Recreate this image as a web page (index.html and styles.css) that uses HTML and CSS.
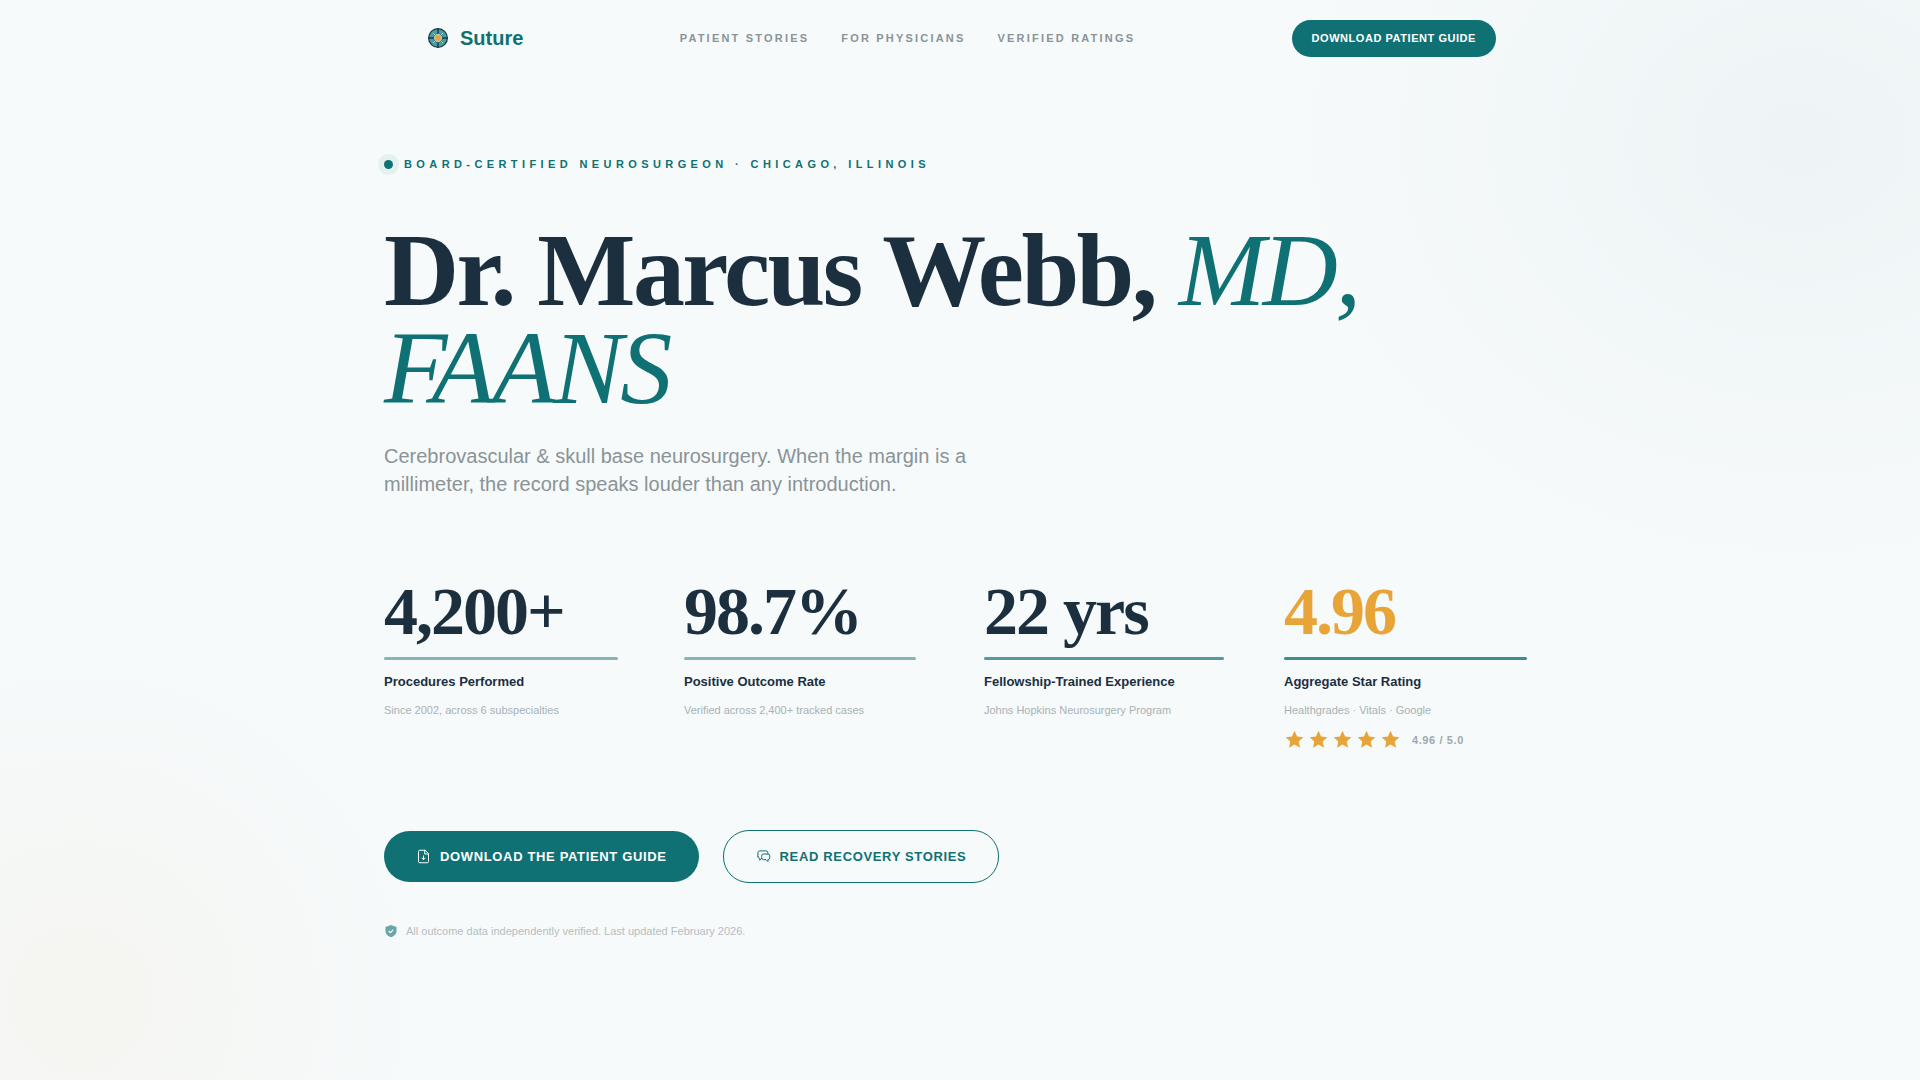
FILE: index.html
```html
<!DOCTYPE html>
<html lang="en">
<head>
    <meta charset="UTF-8">
    <meta name="viewport" content="width=device-width, initial-scale=1.0">
    <title>Dr. Marcus Webb, MD, FAANS</title>
    <link rel="stylesheet" href="styles.css">
</head>
<body>
    <div class="page">
        <header class="topbar">
            <a class="brand" href="#">
                <svg class="brand-mark" viewBox="0 0 24 24">
                    <circle cx="12" cy="12" r="12" fill="#1b3a4b"/>
                    <circle cx="12" cy="12" r="8" fill="none" stroke="#4f9c9c" stroke-width="5"/>
                    <path d="M12 0v24M0 12h24" stroke="#1b3a4b" stroke-width="1.8"/>
                    <path d="M6 6l12 12M18 6L6 18" stroke="#a5cdc8" stroke-width="1.2"/>
                    <circle cx="12" cy="12" r="5" fill="#a5cdc8"/>
                    <circle cx="12" cy="12" r="3.2" fill="#e8a436"/>
                </svg>
                <span>Suture</span>
            </a>
            <nav class="nav-links">
                <a href="#">Patient Stories</a>
                <a href="#">For Physicians</a>
                <a href="#">Verified Ratings</a>
            </nav>
            <a class="nav-cta" href="#">Download Patient Guide</a>
        </header>

        <main class="hero">
            <div class="eyebrow">
                <span class="eyebrow-dot"></span>
                <span>Board-Certified Neurosurgeon · Chicago, Illinois</span>
            </div>

            <h1 class="hero-title">Dr. Marcus Webb, <em>MD, FAANS</em></h1>

            <p class="hero-sub">Cerebrovascular &amp; skull base neurosurgery. When the margin is a millimeter, the record speaks louder than any introduction.</p>

            <section class="stats">
                <div class="stat">
                    <div class="stat-value">4,200+</div>
                    <div class="stat-bar bar-1" style="width: 234px"></div>
                    <div class="stat-label">Procedures Performed</div>
                    <div class="stat-note">Since 2002, across 6 subspecialties</div>
                </div>
                <div class="stat">
                    <div class="stat-value">98.7%</div>
                    <div class="stat-bar bar-2" style="width: 232px"></div>
                    <div class="stat-label">Positive Outcome Rate</div>
                    <div class="stat-note">Verified across 2,400+ tracked cases</div>
                </div>
                <div class="stat">
                    <div class="stat-value">22 yrs</div>
                    <div class="stat-bar bar-3" style="width: 240px"></div>
                    <div class="stat-label">Fellowship-Trained Experience</div>
                    <div class="stat-note">Johns Hopkins Neurosurgery Program</div>
                </div>
                <div class="stat">
                    <div class="stat-value gold">4.96</div>
                    <div class="stat-bar bar-4" style="width: 243px"></div>
                    <div class="stat-label">Aggregate Star Rating</div>
                    <div class="stat-note">Healthgrades · Vitals · Google</div>
                    <div class="rating">
                        <div class="stars">
                            <svg viewBox="0 0 24 24"><path d="M12 2l3 6.6 7.2.8-5.4 4.8 1.5 7.1L12 17.7l-6.3 3.6 1.5-7.1L1.800 9.400 9 8.600z"/></svg>
                            <svg viewBox="0 0 24 24"><path d="M12 2l3 6.6 7.2.8-5.4 4.8 1.5 7.1L12 17.7l-6.3 3.6 1.5-7.1L1.800 9.400 9 8.600z"/></svg>
                            <svg viewBox="0 0 24 24"><path d="M12 2l3 6.6 7.2.8-5.4 4.8 1.5 7.1L12 17.7l-6.3 3.6 1.5-7.1L1.800 9.400 9 8.600z"/></svg>
                            <svg viewBox="0 0 24 24"><path d="M12 2l3 6.6 7.2.8-5.4 4.8 1.5 7.1L12 17.7l-6.3 3.6 1.5-7.1L1.800 9.400 9 8.600z"/></svg>
                            <svg viewBox="0 0 24 24"><path d="M12 2l3 6.6 7.2.8-5.4 4.8 1.5 7.1L12 17.7l-6.3 3.6 1.5-7.1L1.800 9.400 9 8.600z"/></svg>
                        </div>
                        <span class="rating-text">4.96 / 5.0</span>
                    </div>
                </div>
            </section>

            <div class="actions">
                <a class="btn btn-solid" href="#">
                    <svg class="btn-icon" viewBox="0 0 24 24">
                        <path d="M14 2H6a2 2 0 0 0-2 2v16a2 2 0 0 0 2 2h12a2 2 0 0 0 2-2V8z"/>
                        <path d="M14 2v6h6M12 11v6M9.500 14.500L12 17l2.500-2.500"/>
                    </svg>
                    Download the Patient Guide
                </a>
                <a class="btn btn-outline" href="#">
                    <svg class="btn-icon" viewBox="0 0 24 24">
                        <path d="M3 12V6a3 3 0 0 1 3-3h10a3 3 0 0 1 3 3v2"/>
                        <path d="M3 12a3 3 0 0 0 3 3v3l3-3"/>
                        <path d="M9 11a3 3 0 0 1 3-3h7a3 3 0 0 1 3 3v3a3 3 0 0 1-3 3v3l-3-3h-4a3 3 0 0 1-3-3z"/>
                    </svg>
                    Read Recovery Stories
                </a>
            </div>

            <div class="verified">
                <svg viewBox="0 0 24 24">
                    <path class="shield" d="M12 1.500l9.500 3.500v6.500c0 5.500-4 9.500-9.500 11-5.500-1.500-9.500-5.500-9.500-11V5z"/>
                    <path class="tick" d="M8 12l3 3 5-5.500"/>
                </svg>
                <span>All outcome data independently verified. Last updated February 2026.</span>
            </div>
        </main>
    </div>
</body>
</html>
```

FILE: styles.css
```css
* {
    margin: 0;
    padding: 0;
    box-sizing: border-box;
}

html, body {
    height: 100%;
}

body {
    font-family: 'Liberation Sans', Arial, sans-serif;
    color: #1b2f3e;
    background-color: #f6fafb;
    background-image:
        radial-gradient(ellipse 760px 640px at 1800px 140px, rgba(15, 80, 90, 0.035), transparent 70%),
        radial-gradient(ellipse 520px 520px at 80px 1000px, rgba(232, 164, 54, 0.05), transparent 70%);
    overflow: hidden;
}

a {
    text-decoration: none;
}

.page {
    min-height: 100%;
}

/* Top bar */
.topbar {
    width: 1070px;
    height: 76px;
    margin-left: 426px;
    display: flex;
    align-items: center;
    justify-content: space-between;
}

.brand {
    display: flex;
    align-items: center;
    gap: 12px;
    padding-left: 2px;
    font-size: 20px;
    font-weight: 700;
    color: #0f7173;
}

.brand-mark {
    width: 20px;
    height: 20px;
}

.nav-links {
    display: flex;
    gap: 32px;
}

.nav-links a {
    font-size: 11px;
    font-weight: 700;
    letter-spacing: 2.2px;
    text-transform: uppercase;
    color: #8a9396;
}

.nav-cta {
    padding: 0 20px;
    height: 37px;
    line-height: 37px;
    border-radius: 19px;
    background: #0f7173;
    color: #fff;
    font-size: 11px;
    font-weight: 700;
    letter-spacing: 0.55px;
    text-transform: uppercase;
}

/* Hero */
.hero {
    padding: 82px 0 0 384px;
}

.eyebrow {
    display: flex;
    align-items: center;
    gap: 11px;
    font-size: 11px;
    font-weight: 700;
    letter-spacing: 4.4px;
    text-transform: uppercase;
    color: #0f7173;
}

.eyebrow-dot {
    width: 9px;
    height: 9px;
    border-radius: 50%;
    background: #0f7173;
    box-shadow: 0 0 0 6px rgba(15, 113, 115, 0.07);
}

.hero-title {
    width: 1050px;
    margin-top: 51px;
    font-family: 'Liberation Serif', 'Times New Roman', serif;
    font-size: 104px;
    font-weight: 700;
    line-height: 98px;
    letter-spacing: -2.6px;
    color: #1b2f3e;
}

.hero-title em {
    font-weight: 400;
    color: #0f7173;
}

.hero-sub {
    width: 600px;
    margin-top: 25px;
    font-size: 20px;
    line-height: 28px;
    color: #8a9396;
}

/* Stats */
.stats {
    display: grid;
    grid-template-columns: repeat(4, 300px);
    margin-top: 79px;
}

.stat-value {
    font-family: 'Liberation Serif', 'Times New Roman', serif;
    font-size: 68px;
    font-weight: 700;
    line-height: 68px;
    letter-spacing: -2px;
    color: #1b2f3e;
}

.stat-value.gold {
    color: #e8a436;
}

.stat-bar {
    height: 3px;
    margin-top: 12px;
    background: #0f7173;
    border-radius: 2px;
}

.bar-1 { opacity: 0.5; }
.bar-2 { opacity: 0.5; }
.bar-3 { opacity: 0.7; }
.bar-4 { opacity: 0.8; }

.stat-label {
    margin-top: 13px;
    font-size: 13px;
    font-weight: 700;
    line-height: 18px;
    color: #1b2f3e;
}

.stat-note {
    margin-top: 11px;
    font-size: 11px;
    line-height: 16px;
    color: #a9b1b4;
}

.rating {
    display: flex;
    align-items: center;
    gap: 11px;
    margin-top: 11px;
}

.stars {
    display: flex;
    gap: 3px;
}

.stars svg {
    width: 21px;
    height: 21px;
    fill: #e8a436;
}

.rating-text {
    font-size: 11px;
    font-weight: 700;
    letter-spacing: 0.6px;
    color: #a0a8ab;
}

/* Actions */
.actions {
    display: flex;
    align-items: center;
    gap: 24px;
    margin-top: 80px;
}

.btn {
    display: flex;
    align-items: center;
    gap: 9px;
    height: 51px;
    padding: 0 32px;
    border-radius: 26px;
    font-size: 13px;
    font-weight: 700;
    letter-spacing: 0.65px;
    text-transform: uppercase;
}

.btn-icon {
    width: 15px;
    height: 15px;
    fill: none;
    stroke: currentColor;
    stroke-width: 1.6;
    stroke-linecap: round;
    stroke-linejoin: round;
}

.btn-solid {
    background: #0f7173;
    color: #fff;
}

.btn-outline {
    height: 53px;
    border: 1px solid #0f7173;
    color: #0f7173;
}

.verified {
    display: flex;
    align-items: center;
    gap: 8px;
    margin-top: 41px;
    font-size: 11px;
    color: #b6bdc0;
}

.verified svg {
    width: 14px;
    height: 14px;
}

.shield {
    fill: #6aa6a8;
}

.tick {
    fill: none;
    stroke: #f6fafb;
    stroke-width: 2;
}
```
